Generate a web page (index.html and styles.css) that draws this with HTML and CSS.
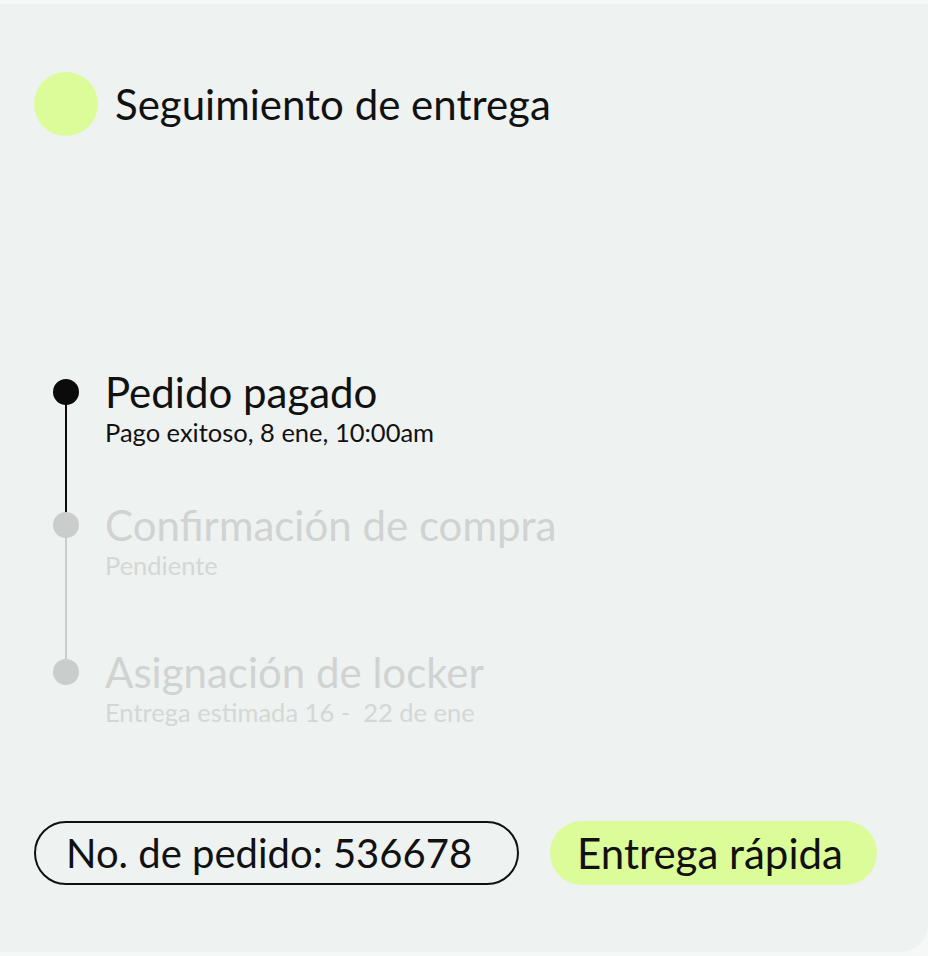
FILE: index.html
```html
<!DOCTYPE html>
<html lang="es">
<head>
    <meta charset="UTF-8">
    <meta name="viewport" content="width=device-width, initial-scale=1.0">
    <title>Seguimiento de entrega</title>
    <link rel="stylesheet" href="styles.css">
</head>
<body>
    <div class="card">
        <div class="header">
            <span class="header-dot"></span>
            <h1>Seguimiento de entrega</h1>
        </div>

        <div class="timeline">
            <div class="step done first">
                <div class="marker">
                    <span class="dot"></span>
                    <span class="line"></span>
                </div>
                <div class="step-text">
                    <div class="step-title">Pedido pagado</div>
                    <div class="step-sub">Pago exitoso, 8 ene, 10:00am</div>
                </div>
            </div>
            <div class="step pending">
                <div class="marker">
                    <span class="dot"></span>
                    <span class="line"></span>
                </div>
                <div class="step-text">
                    <div class="step-title">Confirmación de compra</div>
                    <div class="step-sub">Pendiente</div>
                </div>
            </div>
            <div class="step pending last">
                <div class="marker">
                    <span class="dot"></span>
                </div>
                <div class="step-text">
                    <div class="step-title">Asignación de locker</div>
                    <div class="step-sub">Entrega estimada 16 -&nbsp; 22 de ene</div>
                </div>
            </div>
        </div>

        <div class="tags">
            <span class="tag outline">No. de pedido: 536678</span>
            <span class="tag green">Entrega rápida</span>
        </div>
    </div>
</body>
</html>
```

FILE: styles.css
```css
body {
    margin: 0;
    padding: 4px 0 0 0;
    background-color: #f6f8f7;
    font-family: Lato, "Open Sans", sans-serif;
    color: #111111;
}
.card {
    background-color: #eef2f0;
    height: 948px;
    box-sizing: border-box;
    border-bottom-right-radius: 28px;
    padding: 68px 0 0 34px;
}
.header {
    display: flex;
    align-items: center;
    gap: 17px;
}
.header-dot {
    width: 64px;
    height: 64px;
    border-radius: 50%;
    background-color: #dcfc9a;
    flex-shrink: 0;
}
h1 {
    margin: 0;
    font-size: 42px;
    font-weight: 400;
    line-height: 48px;
    color: #111111;
}
.timeline {
    margin-top: 232px;
    padding-left: 19px;
}
.step {
    display: flex;
    gap: 26px;
    height: 147px;
}
.step.first {
    height: 133px;
}
.step.last {
    height: auto;
}
.marker {
    width: 26px;
    display: flex;
    flex-direction: column;
    align-items: center;
    padding-top: 11px;
}
.dot {
    width: 26px;
    height: 26px;
    border-radius: 50%;
    background-color: #0b0b0b;
    flex-shrink: 0;
}
.line {
    width: 2px;
    flex: 1;
    margin-top: -2px;
    margin-bottom: -13px;
    background-color: #0b0b0b;
}
.step-title {
    font-size: 42px;
    line-height: 48px;
}
.step-sub {
    font-size: 25.5px;
    line-height: 30px;
    margin-top: 1px;
}
.pending .dot,
.pending .line {
    background-color: #cbcccc;
}
.pending .step-title {
    color: #d1d3d3;
}
.pending .step-sub {
    color: #d5d7d7;
}
.tags {
    display: flex;
    gap: 31px;
    margin-top: 94px;
}
.tag {
    height: 64px;
    box-sizing: border-box;
    display: flex;
    align-items: center;
    border-radius: 32px;
}
.tag.outline {
    border: 2px solid #111111;
    padding: 0 45px 0 30px;
    font-size: 40px;
}
.tag.green {
    background-color: #dcfc9a;
    padding: 0 34px 0 27px;
    font-size: 42px;
}
```
